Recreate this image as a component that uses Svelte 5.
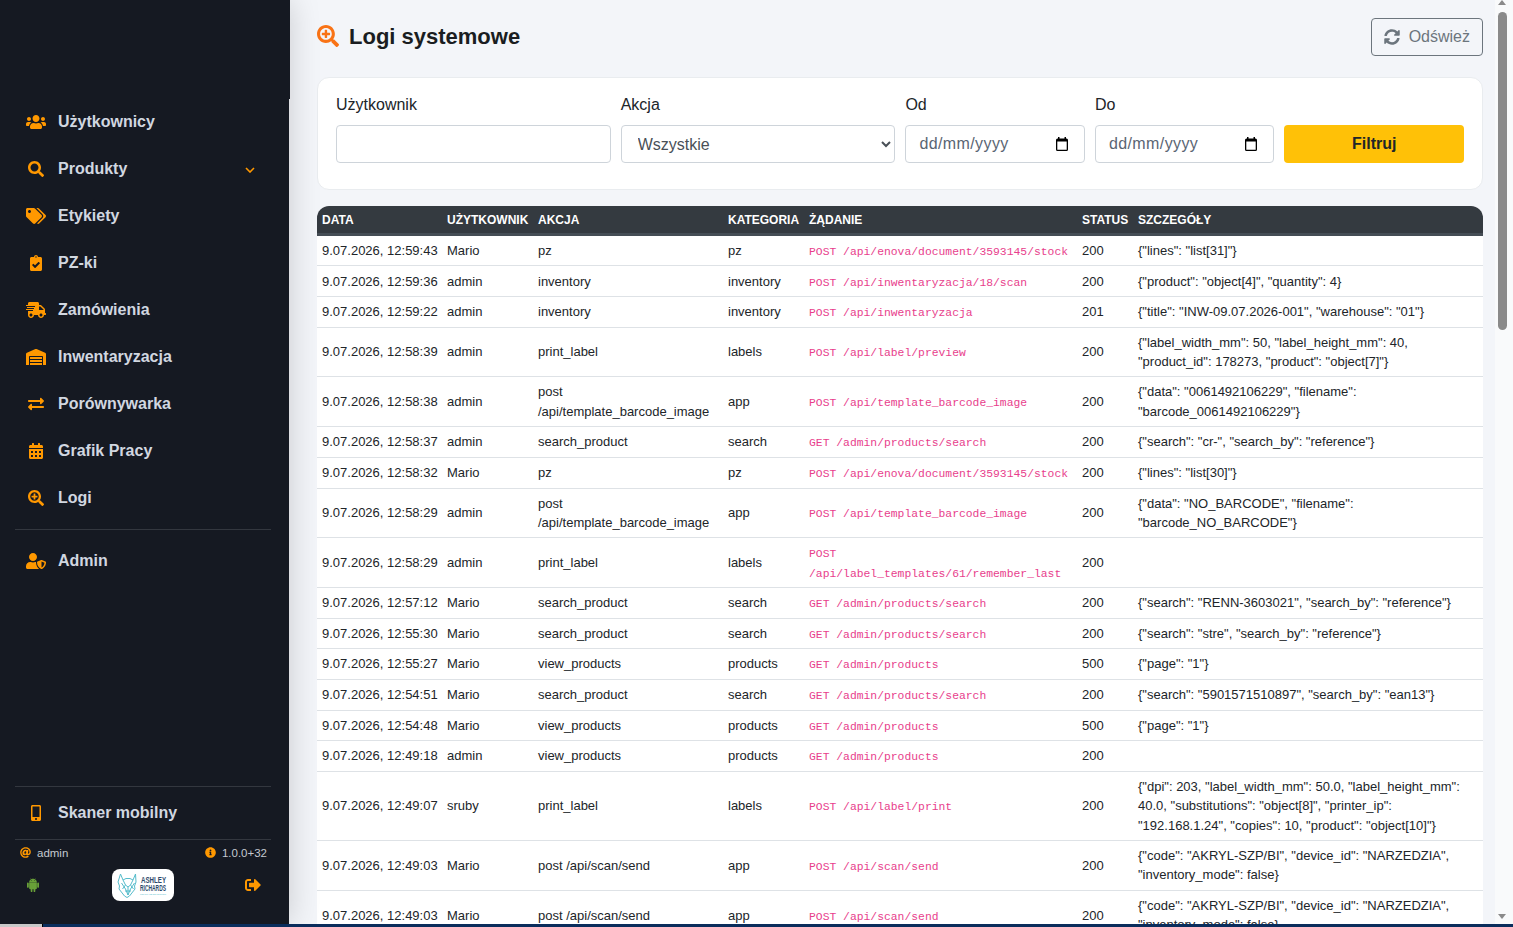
<script>
	const icons = {
		users: { vb: '0 0 640 512', d: 'M96 224c35.3 0 64-28.7 64-64s-28.7-64-64-64-64 28.7-64 64 28.7 64 64 64zm448 0c35.3 0 64-28.7 64-64s-28.7-64-64-64-64 28.7-64 64 28.7 64 64 64zm32 32h-64c-17.6 0-33.5 7.1-45.1 18.6 40.3 22.1 68.9 62 75.1 109.4h66c17.7 0 32-14.3 32-32v-32c0-35.3-28.7-64-64-64zm-256 0c61.9 0 112-50.1 112-112S381.9 32 320 32 208 82.1 208 144s50.1 112 112 112zm76.8 32h-8.3c-20.8 10-43.9 16-68.5 16s-47.6-6-68.5-16h-8.3C179.6 288 128 339.6 128 403.2V432c0 26.5 21.5 48 48 48h288c26.5 0 48-21.5 48-48v-28.8c0-63.6-51.6-115.2-115.2-115.2zm-223.7-13.4C161.5 263.1 145.6 256 128 256H64c-35.3 0-64 28.7-64 64v32c0 17.7 14.3 32 32 32h65.9c6.3-47.4 34.9-87.3 75.2-109.4z' },
		search: { vb: '0 0 512 512', d: 'M505 442.7L405.3 343c-4.5-4.5-10.6-7-17-7H372c27.6-35.3 44-79.7 44-128C416 93.1 322.9 0 208 0S0 93.1 0 208s93.1 208 208 208c48.3 0 92.7-16.4 128-44v16.3c0 6.4 2.5 12.5 7 17l99.7 99.7c9.4 9.4 24.6 9.4 33.9 0l28.3-28.3c9.4-9.4 9.4-24.6.1-34zM208 336c-70.7 0-128-57.2-128-128 0-70.7 57.2-128 128-128 70.7 0 128 57.2 128 128 0 70.7-57.2 128-128 128z' },
		searchPlus: { vb: '0 0 512 512', d: 'M304 192v32c0 6.6-5.4 12-12 12h-56v56c0 6.6-5.4 12-12 12h-32c-6.6 0-12-5.4-12-12v-56h-56c-6.6 0-12-5.4-12-12v-32c0-6.6 5.4-12 12-12h56v-56c0-6.6 5.4-12 12-12h32c6.6 0 12 5.4 12 12v56h56c6.6 0 12 5.4 12 12zm201 284.7L476.7 505c-9.4 9.4-24.6 9.4-33.9 0L343 405.3c-4.5-4.5-7-10.6-7-17V372c-35.3 27.6-79.7 44-128 44C93.1 416 0 322.9 0 208S93.1 0 208 0s208 93.1 208 208c0 48.3-16.4 92.7-44 128h16.3c6.4 0 12.5 2.5 17 7l99.7 99.7c9.3 9.4 9.3 24.6 0 34zM344 208c0-75.2-60.8-136-136-136S72 132.8 72 208s60.8 136 136 136 136-60.8 136-136z' },
		tags: { vb: '0 0 640 512', d: 'M497.941 225.941L286.059 14.059A48 48 0 0 0 252.118 0H48C21.49 0 0 21.49 0 48v204.118a48 48 0 0 0 14.059 33.941l211.882 211.882c18.744 18.745 49.136 18.746 67.882 0l204.118-204.118c18.745-18.745 18.745-49.137 0-67.882zM112 160c-26.51 0-48-21.49-48-48s21.49-48 48-48 48 21.49 48 48-21.49 48-48 48zm513.941 133.823L421.823 497.941c-18.745 18.745-49.137 18.745-67.882 0l-.36-.36L527.64 323.522c16.999-16.999 26.36-39.6 26.36-63.64s-9.362-46.641-26.36-63.64L331.397 0h48.721a48 48 0 0 1 33.941 14.059l211.882 211.882c18.745 18.745 18.745 49.137 0 67.882z' },
		clipboard: { vb: '0 0 384 512', d: 'M336 64h-80c0-35.3-28.7-64-64-64s-64 28.7-64 64H48C21.5 64 0 85.5 0 112v352c0 26.5 21.5 48 48 48h288c26.5 0 48-21.5 48-48V112c0-26.5-21.5-48-48-48zM192 40c13.3 0 24 10.7 24 24s-10.7 24-24 24-24-10.7-24-24 10.7-24 24-24zm121.2 231.8l-143 141.8c-4.7 4.7-12.3 4.6-17-.1l-82.6-83.3c-4.7-4.7-4.6-12.3.1-17L99.1 285c4.7-4.7 12.3-4.6 17 .1l46 46.4 106-105.2c4.7-4.7 12.3-4.6 17 .1l28.2 28.4c4.7 4.8 4.6 12.3-.1 17z' },
		truck: { vb: '0 0 640 512', d: 'M624 352h-16V243.9c0-12.7-5.1-24.9-14.1-33.9L494 110.1c-9-9-21.2-14.1-33.9-14.1H416V48c0-26.5-21.5-48-48-48H112C85.5 0 64 21.5 64 48v48H8c-4.4 0-8 3.6-8 8v16c0 4.4 3.6 8 8 8h272c4.4 0 8 3.6 8 8v16c0 4.4-3.6 8-8 8H40c-4.4 0-8 3.6-8 8v16c0 4.4 3.6 8 8 8h208c4.4 0 8 3.6 8 8v16c0 4.4-3.6 8-8 8H8c-4.4 0-8 3.6-8 8v16c0 4.4 3.6 8 8 8h208c4.4 0 8 3.6 8 8v16c0 4.4-3.6 8-8 8H64v128c0 53 43 96 96 96s96-43 96-96h128c0 53 43 96 96 96s96-43 96-96h48c8.8 0 16-7.2 16-16v-32c0-8.8-7.2-16-16-16zM160 464c-26.5 0-48-21.5-48-48s21.5-48 48-48 48 21.5 48 48-21.5 48-48 48zm320 0c-26.5 0-48-21.5-48-48s21.5-48 48-48 48 21.5 48 48-21.5 48-48 48zm80-208H416V144h44.1l99.9 99.9V256z' },
		warehouse: { vb: '0 0 640 512', d: 'M504 352H136.4c-4.4 0-8 3.6-8 8l-.1 48c0 4.4 3.6 8 8 8H504c4.4 0 8-3.6 8-8v-48c0-4.4-3.6-8-8-8zm0 96H136.1c-4.4 0-8 3.6-8 8l-.1 48c0 4.4 3.6 8 8 8h368c4.4 0 8-3.6 8-8v-48c0-4.4-3.6-8-8-8zm0-192H136.6c-4.4 0-8 3.6-8 8l-.1 48c0 4.4 3.6 8 8 8H504c4.4 0 8-3.6 8-8v-48c0-4.4-3.6-8-8-8zm106.5-139L338.4 3.7a48.15 48.15 0 0 0-36.9 0L29.5 117C11.7 124.5 0 141.9 0 161.3V504c0 4.4 3.6 8 8 8h80c4.4 0 8-3.6 8-8V256c0-17.6 14.6-32 32.6-32h382.8c18 0 32.6 14.4 32.6 32v248c0 4.4 3.6 8 8 8h80c4.4 0 8-3.6 8-8V161.3c0-19.4-11.7-36.8-29.5-44.3z' },
		exchange: { vb: '0 0 512 512', d: 'M0 168v-16c0-13.255 10.745-24 24-24h360V80c0-21.367 25.899-32.042 40.971-16.971l80 80c9.372 9.373 9.372 24.569 0 33.941l-80 80C409.956 271.982 384 261.456 384 240v-48H24c-13.255 0-24-10.745-24-24zm488 152H128v-48c0-21.314-25.862-32.08-40.971-16.971l-80 80c-9.372 9.373-9.372 24.569 0 33.941l80 80C102.057 463.997 128 453.437 128 432v-48h360c13.255 0 24-10.745 24-24v-16c0-13.255-10.745-24-24-24z' },
		calendar: { vb: '0 0 448 512', d: 'M0 464c0 26.5 21.5 48 48 48h352c26.5 0 48-21.5 48-48V192H0v272zm320-196c0-6.6 5.4-12 12-12h40c6.6 0 12 5.4 12 12v40c0 6.6-5.4 12-12 12h-40c-6.6 0-12-5.4-12-12v-40zm0 128c0-6.6 5.4-12 12-12h40c6.6 0 12 5.4 12 12v40c0 6.6-5.4 12-12 12h-40c-6.6 0-12-5.4-12-12v-40zM192 268c0-6.6 5.4-12 12-12h40c6.6 0 12 5.4 12 12v40c0 6.6-5.4 12-12 12h-40c-6.6 0-12-5.4-12-12v-40zm0 128c0-6.6 5.4-12 12-12h40c6.6 0 12 5.4 12 12v40c0 6.6-5.4 12-12 12h-40c-6.6 0-12-5.4-12-12v-40zM64 268c0-6.6 5.4-12 12-12h40c6.6 0 12 5.4 12 12v40c0 6.6-5.4 12-12 12H76c-6.6 0-12-5.4-12-12v-40zm0 128c0-6.6 5.4-12 12-12h40c6.6 0 12 5.4 12 12v40c0 6.6-5.4 12-12 12H76c-6.6 0-12-5.4-12-12v-40zM400 64h-48V16c0-8.8-7.2-16-16-16h-32c-8.8 0-16 7.2-16 16v48H160V16c0-8.8-7.2-16-16-16h-32c-8.8 0-16 7.2-16 16v48H48C21.5 64 0 85.5 0 112v48h448v-48c0-26.5-21.5-48-48-48z' },
		userShield: { vb: '0 0 640 512', d: 'M622.3 271.1l-115.2-45c-4.1-1.6-12.6-3.7-22.2 0l-115.2 45c-10.7 4.2-17.7 14-17.7 24.9 0 111.6 68.7 188.8 132.9 213.9 9.6 3.7 18 1.6 22.2 0C558.4 489.9 640 420.5 640 296c0-10.9-7-20.7-17.7-24.9zM496 462.4V273.3l95.5 37.3c-5.6 87.1-60.9 135.4-95.5 151.8zM224 256c70.7 0 128-57.3 128-128S294.7 0 224 0 96 57.3 96 128s57.3 128 128 128zm96 40c0-2.5.8-4.7 1.1-7.2-2.5-.1-4.9-.8-7.5-.8h-16.7c-22.2 10.2-46.9 16-72.9 16s-50.6-5.8-72.9-16h-16.7C60.2 288 0 348.2 0 422.4V464c0 26.5 21.5 48 48 48h352c6.8 0 13.3-1.5 19.2-4-54-42.9-99.2-116.7-99.2-212z' },
		mobile: { vb: '0 0 320 512', d: 'M272 0H48C21.5 0 0 21.5 0 48v416c0 26.5 21.5 48 48 48h224c26.5 0 48-21.5 48-48V48c0-26.5-21.5-48-48-48zM160 480c-17.7 0-32-14.3-32-32s14.3-32 32-32 32 14.3 32 32-14.3 32-32 32zm112-108c0 6.6-5.4 12-12 12H60c-6.6 0-12-5.4-12-12V60c0-6.6 5.4-12 12-12h200c6.6 0 12 5.4 12 12v312z' },
		at: { vb: '0 0 512 512', d: 'M256 8C118.941 8 8 118.919 8 256c0 137.059 110.919 248 248 248 48.154 0 95.342-14.14 135.408-40.223 12.005-7.815 14.625-24.288 5.552-35.372l-10.177-12.433c-7.671-9.371-21.179-11.667-31.373-5.129C325.92 429.757 291.314 440 256 440c-101.458 0-184-82.542-184-184S154.542 72 256 72c100.139 0 184 57.619 184 160 0 38.786-21.093 79.742-58.17 83.693-17.349-.454-16.91-12.857-13.476-30.024l23.433-121.11C394.653 149.75 383.308 136 368.225 136h-44.981a13.518 13.518 0 0 0-13.432 11.993l-.01.092c-14.697-17.901-40.448-21.775-59.971-21.775-74.58 0-137.831 62.234-137.831 151.46 0 65.303 36.785 105.87 96 105.87 26.984 0 57.369-15.637 74.991-38.333 9.522 34.104 40.613 34.103 70.71 34.103C462.609 379.41 504 307.798 504 232 504 95.653 394.023 8 256 8zm-21.68 304.43c-22.249 0-36.07-15.623-36.07-40.771 0-44.993 30.779-72.729 58.63-72.729 22.292 0 35.601 15.241 35.601 40.77 0 45.061-33.875 72.73-58.161 72.73z' },
		info: { vb: '0 0 512 512', d: 'M256 8C119.043 8 8 119.083 8 256c0 136.997 111.043 248 248 248s248-111.003 248-248C504 119.083 392.957 8 256 8zm0 110c23.196 0 42 18.804 42 42s-18.804 42-42 42-42-18.804-42-42 18.804-42 42-42zm56 254c0 6.627-5.373 12-12 12h-88c-6.627 0-12-5.373-12-12v-24c0-6.627 5.373-12 12-12h12v-64h-12c-6.627 0-12-5.373-12-12v-24c0-6.627 5.373-12 12-12h64c6.627 0 12 5.373 12 12v100h12c6.627 0 12 5.373 12 12v24z' },
		android: { vb: '0 0 448 512', d: 'M89.6 204.5v115.8c0 15.4-12.1 27.7-27.5 27.7-15.3 0-30.1-12.4-30.1-27.7V204.5c0-15.1 14.8-27.5 30.1-27.5 15.1 0 27.5 12.4 27.5 27.5zm10.8 157c0 16.4 13.2 29.6 29.6 29.6h19.9l.3 61.1c0 36.9 55.2 36.6 55.2 0v-61.1h37.2v61.1c0 36.7 55.5 36.8 55.5 0v-61.1h20.2c16.2 0 29.4-13.2 29.4-29.6V182.1H100.4v179.4zm248-189.1H99.3c0-42.8 25.6-80 63.6-99.4l-19.1-35.3c-2.8-4.9 4.3-8 6.7-3.8l19.4 35.6c34.9-15.5 75-14.7 108.3 0L297.5 34c2.5-4.3 9.5-1.1 6.7 3.8L285.1 73c37.7 19.4 63.3 56.6 63.3 99.4zm-170.7-55.5c0-5.7-4.6-10.5-10.5-10.5-5.7 0-10.2 4.8-10.2 10.5s4.6 10.5 10.2 10.5c5.9 0 10.5-4.8 10.5-10.5zm113.4 0c0-5.7-4.6-10.5-10.2-10.5-5.9 0-10.5 4.8-10.5 10.5s4.6 10.5 10.5 10.5c5.6 0 10.2-4.8 10.2-10.5zm94.8 60.5c-15.1 0-27.5 12.1-27.5 27.5v115.8c0 15.4 12.4 27.7 27.5 27.7 15.4 0 30.1-12.4 30.1-27.7V204.5c0-15.4-14.8-27.5-30.1-27.5z' },
		signOut: { vb: '0 0 512 512', d: 'M497 273L329 441c-15 15-41 4.5-41-17v-96H152c-13.3 0-24-10.7-24-24v-96c0-13.3 10.7-24 24-24h136V88c0-21.4 25.9-32 41-17l168 168c9.3 9.4 9.3 24.6 0 34zM192 436v-40c0-6.6-5.4-12-12-12H96c-17.7 0-32-14.3-32-32V160c0-17.7 14.3-32 32-32h84c6.6 0 12-5.4 12-12V76c0-6.6-5.4-12-12-12H96c-53 0-96 43-96 96v192c0 53 43 96 96 96h84c6.6 0 12-5.4 12-12z' },
		sync: { vb: '0 0 512 512', d: 'M370.72 133.28C339.458 104.008 298.888 87.962 255.848 88c-77.458.068-144.328 53.178-162.791 126.85-1.344 5.363-6.122 9.15-11.651 9.15H24.103c-7.498 0-13.194-6.807-11.807-14.176C33.933 94.924 134.813 8 256 8c66.448 0 126.791 26.136 171.315 68.685L463.03 40.97C478.149 25.851 504 36.559 504 57.941V192c0 13.255-10.745 24-24 24H345.941c-21.382 0-32.09-25.851-16.971-40.971l41.75-41.749zM32 296h134.059c21.382 0 32.09 25.851 16.971 40.971l-41.75 41.75c31.262 29.273 71.835 45.319 114.876 45.28 77.418-.07 144.315-53.144 162.787-126.849 1.344-5.363 6.122-9.15 11.651-9.15h57.304c7.498 0 13.194 6.807 11.807 14.176C478.067 417.076 377.187 504 256 504c-66.448 0-126.791-26.136-171.315-68.685L48.97 471.03C33.851 486.149 8 475.441 8 454.059V320c0-13.255 10.745-24 24-24z' }
	};

	const nav = [
		{ icon: 'users', label: 'Użytkownicy' },
		{ icon: 'search', label: 'Produkty', caret: true },
		{ icon: 'tags', label: 'Etykiety' },
		{ icon: 'clipboard', label: 'PZ-ki' },
		{ icon: 'truck', label: 'Zamówienia' },
		{ icon: 'warehouse', label: 'Inwentaryzacja' },
		{ icon: 'exchange', label: 'Porównywarka' },
		{ icon: 'calendar', label: 'Grafik Pracy' },
		{ icon: 'searchPlus', label: 'Logi' }
	];

	const columns = ['Data', 'Użytkownik', 'Akcja', 'Kategoria', 'Żądanie', 'Status', 'Szczegóły'];

	const logs = [
		['9.07.2026, 12:59:43', 'Mario', 'pz', 'pz', 'POST /api/enova/document/3593145/stock', 200, '{"lines": "list[31]"}'],
		['9.07.2026, 12:59:36', 'admin', 'inventory', 'inventory', 'POST /api/inwentaryzacja/18/scan', 200, '{"product": "object[4]", "quantity": 4}'],
		['9.07.2026, 12:59:22', 'admin', 'inventory', 'inventory', 'POST /api/inwentaryzacja', 201, '{"title": "INW-09.07.2026-001", "warehouse": "01"}'],
		['9.07.2026, 12:58:39', 'admin', 'print_label', 'labels', 'POST /api/label/preview', 200, '{"label_width_mm": 50, "label_height_mm": 40, "product_id": 178273, "product": "object[7]"}'],
		['9.07.2026, 12:58:38', 'admin', 'post /api/template_barcode_image', 'app', 'POST /api/template_barcode_image', 200, '{"data": "0061492106229", "filename": "barcode_0061492106229"}'],
		['9.07.2026, 12:58:37', 'admin', 'search_product', 'search', 'GET /admin/products/search', 200, '{"search": "cr-", "search_by": "reference"}'],
		['9.07.2026, 12:58:32', 'Mario', 'pz', 'pz', 'POST /api/enova/document/3593145/stock', 200, '{"lines": "list[30]"}'],
		['9.07.2026, 12:58:29', 'admin', 'post /api/template_barcode_image', 'app', 'POST /api/template_barcode_image', 200, '{"data": "NO_BARCODE", "filename": "barcode_NO_BARCODE"}'],
		['9.07.2026, 12:58:29', 'admin', 'print_label', 'labels', 'POST /api/label_templates/61/remember_last', 200, ''],
		['9.07.2026, 12:57:12', 'Mario', 'search_product', 'search', 'GET /admin/products/search', 200, '{"search": "RENN-3603021", "search_by": "reference"}'],
		['9.07.2026, 12:55:30', 'Mario', 'search_product', 'search', 'GET /admin/products/search', 200, '{"search": "stre", "search_by": "reference"}'],
		['9.07.2026, 12:55:27', 'Mario', 'view_products', 'products', 'GET /admin/products', 500, '{"page": "1"}'],
		['9.07.2026, 12:54:51', 'Mario', 'search_product', 'search', 'GET /admin/products/search', 200, '{"search": "5901571510897", "search_by": "ean13"}'],
		['9.07.2026, 12:54:48', 'Mario', 'view_products', 'products', 'GET /admin/products', 500, '{"page": "1"}'],
		['9.07.2026, 12:49:18', 'admin', 'view_products', 'products', 'GET /admin/products', 200, ''],
		['9.07.2026, 12:49:07', 'sruby', 'print_label', 'labels', 'POST /api/label/print', 200, '{"dpi": 203, "label_width_mm": 50.0, "label_height_mm": 40.0, "substitutions": "object[8]", "printer_ip": "192.168.1.24", "copies": 10, "product": "object[10]"}'],
		['9.07.2026, 12:49:03', 'Mario', 'post /api/scan/send', 'app', 'POST /api/scan/send', 200, '{"code": "AKRYL-SZP/BI", "device_id": "NARZEDZIA", "inventory_mode": false}'],
		['9.07.2026, 12:49:03', 'Mario', 'post /api/scan/send', 'app', 'POST /api/scan/send', 200, '{"code": "AKRYL-SZP/BI", "device_id": "NARZEDZIA", "inventory_mode": false}']
	];
</script>

{#snippet icon(name, cls)}
	<svg class={cls} viewBox={icons[name].vb} aria-hidden="true"><path fill="currentColor" d={icons[name].d} /></svg>
{/snippet}

{#snippet dateField(label)}
	<div class="field">
		<span>{label}</span>
		<div class="control date">
			<span class="date-text">dd/mm/yyyy</span>
			<svg class="date-ico" viewBox="0 0 12 14" aria-hidden="true">
				<path d="M2 0h1.500v1.500h5V0H10v1.500h.5A1.500 1.500 0 0 1 12 3v9.500a1.500 1.500 0 0 1-1.500 1.500h-9A1.500 1.500 0 0 1 0 12.500V3a1.500 1.500 0 0 1 1.500-1.500H2zM1.300 4.500v8.200h9.400V4.500z" fill="#000" fill-rule="evenodd" />
			</svg>
		</div>
	</div>
{/snippet}

<div class="screen">
	<div class="shell">
		<aside class="sidebar">
			<div class="brand"></div>

			<nav class="nav">
				{#each nav as item}
					<div class="nav-item">
						<span class="nav-icon">{@render icon(item.icon, 'ico')}</span>
						<span class="nav-label">{item.label}</span>
						{#if item.caret}
							<svg class="caret" viewBox="0 0 10 6" aria-hidden="true"><path d="M1 1l4 4 4-4" fill="none" stroke="currentColor" stroke-width="1.6" /></svg>
						{/if}
					</div>
				{/each}
				<hr class="rule rule-nav" />
				<div class="nav-item">
					<span class="nav-icon">{@render icon('userShield', 'ico')}</span>
					<span class="nav-label">Admin</span>
				</div>
			</nav>

			<div class="side-bottom">
				<hr class="rule" />
				<div class="nav-item mobile-item">
					<span class="nav-icon">{@render icon('mobile', 'ico')}</span>
					<span class="nav-label">Skaner mobilny</span>
				</div>
				<hr class="rule" />
				<div class="meta">
					<span class="meta-part">{@render icon('at', 'meta-ico')} admin</span>
					<span class="meta-part">{@render icon('info', 'meta-ico')} 1.0.0+32</span>
				</div>
				<div class="tools">
					{@render icon('android', 'android')}
					<div class="logo">
						<svg viewBox="0 0 62 32" width="62" height="32" aria-label="Ashley Richards">
							<g fill="none" stroke="#55bccb" stroke-width="1">
								<path d="M8.500 5l2.500 6 3-1.500h4l3 1.500 2.500-6 .5 8-1.500 4 .5 3-5.500 7-2.500 1.500-2.500-1.500-5.500-7 .5-3-1.500-4z" />
								<path d="M11 11l2.500 5 2.500 2 2.500-2 2.500-5M9.500 14l4 6 2.500 6 2.500-6 4-6M13.500 16l-3 4M18.500 16l3 4M16 18v8M13 22h6" />
							</g>
							<text class="logo-name" x="29" y="13.500" textLength="25" lengthAdjust="spacingAndGlyphs">ASHLEY</text>
							<text class="logo-name" x="28" y="22" textLength="26" lengthAdjust="spacingAndGlyphs">RICHARDS</text>
							<text class="logo-sub" x="28" y="25.500" textLength="26" lengthAdjust="spacingAndGlyphs">SOFTWARE DEVELOPER</text>
						</svg>
					</div>
					{@render icon('signOut', 'sign-out')}
				</div>
			</div>
		</aside>

		<main class="main">
			<header class="page-head">
				<h1 class="page-title">{@render icon('searchPlus', 'title-ico')} Logi systemowe</h1>
				<button class="refresh" type="button">{@render icon('sync', 'refresh-ico')} Odśwież</button>
			</header>

			<section class="filters">
				<label class="field">
					<span>Użytkownik</span>
					<input class="control" type="text" />
				</label>
				<label class="field">
					<span>Akcja</span>
					<select class="control">
						<option>Wszystkie</option>
					</select>
				</label>
				{@render dateField('Od')}
				{@render dateField('Do')}
				<button class="filter-btn" type="button">Filtruj</button>
			</section>

			<div class="table-wrap">
				<table class="logs">
					<colgroup>
						<col class="c-date" /><col class="c-user" /><col class="c-action" /><col class="c-cat" /><col class="c-req" /><col class="c-status" /><col />
					</colgroup>
					<thead>
						<tr>
							{#each columns as col}
								<th>{col}</th>
							{/each}
						</tr>
					</thead>
					<tbody>
						{#each logs as row}
							<tr>
								<td class="nowrap">{row[0]}</td>
								<td>{row[1]}</td>
								<td>{row[2]}</td>
								<td>{row[3]}</td>
								<td><code>{row[4]}</code></td>
								<td>{row[5]}</td>
								<td>{row[6]}</td>
							</tr>
						{/each}
					</tbody>
				</table>
			</div>
		</main>

		<div class="scrollbar" aria-hidden="true">
			<span class="arrow up"></span>
			<span class="thumb"></span>
			<span class="arrow down"></span>
		</div>
	</div>

	<div class="taskbar"><span class="task-start"></span></div>
</div>

<style>
	:global(body) {
		margin: 0;
		background: #f3f5f9;
		font-family: 'Liberation Sans', Arial, sans-serif;
		color: #212529;
	}

	.screen {
		width: 1513px;
		height: 927px;
		overflow: hidden;
	}

	.shell {
		display: flex;
		height: 924px;
		overflow: hidden;
	}

	/* sidebar */
	.sidebar {
		position: relative;
		z-index: 2;
		flex: 0 0 289px;
		min-width: 0;
		display: flex;
		flex-direction: column;
		background: #151922;
		box-shadow: 0 0 30px rgba(0, 0, 0, 0.18);
	}

	.brand {
		width: 290px;
		height: 98.500px;
		flex: none;
		background: #151922;
	}

	.nav {
		flex: 1;
	}

	.nav-item {
		display: flex;
		align-items: center;
		height: 47px;
		padding-left: 26px;
		padding-right: 34px;
		font-size: 16px;
		font-weight: 700;
		color: #d1d7e0;
	}

	.nav-icon {
		display: flex;
		justify-content: center;
		width: 20px;
		margin-right: 12px;
		color: #ff9800;
	}

	.ico {
		height: 16px;
		width: auto;
		display: block;
	}

	.nav-label {
		flex: 1;
	}

	.caret {
		width: 10px;
		height: 6px;
		margin-top: 2px;
		color: #ff9800;
	}

	.rule {
		height: 1px;
		margin: 0 18px 0 15px;
		border: 0;
		background: #33373f;
	}

	.rule-nav {
		margin-top: 7.500px;
		margin-bottom: 7px;
	}

	.side-bottom {
		flex: 0 0 auto;
		height: 138px;
	}

	.mobile-item {
		margin-top: 2px;
		margin-bottom: 3px;
	}

	.meta {
		display: flex;
		justify-content: space-between;
		align-items: center;
		height: 25px;
		margin: 0 22px 0 20px;
		font-size: 11.500px;
		color: #c4c9d0;
	}

	.meta-part {
		display: flex;
		align-items: center;
		gap: 6px;
	}

	.meta-ico {
		width: 11px;
		height: 11px;
		color: #ff9800;
	}

	.tools {
		display: flex;
		justify-content: space-between;
		align-items: center;
		margin: 4px 28px 0 26px;
	}

	.android {
		width: 14px;
		height: 16px;
		color: #689f38;
	}

	.logo {
		width: 62px;
		height: 32px;
		background: #fff;
		border-radius: 8px;
	}

	.logo svg {
		display: block;
	}

	.logo-name {
		font-family: 'Liberation Sans', Arial, sans-serif;
		font-size: 9px;
		font-weight: 700;
		fill: #2d4a6b;
	}

	.logo-sub {
		font-family: 'Liberation Sans', Arial, sans-serif;
		font-size: 2.500px;
		fill: #5cc0cf;
	}

	.sign-out {
		width: 16px;
		height: 16px;
		color: #ff9800;
	}

	/* main */
	.main {
		flex: 1;
		min-width: 0;
		padding: 18px 12px 0 28px;
		overflow: hidden;
	}

	.page-head {
		display: flex;
		justify-content: space-between;
		align-items: center;
		height: 38px;
		margin-bottom: 21px;
	}

	.page-title {
		display: flex;
		align-items: center;
		gap: 10px;
		margin: 0;
		font-size: 22px;
		font-weight: 700;
		color: #1a1d21;
	}

	.title-ico {
		width: 22px;
		height: 22px;
		margin-bottom: 2px;
		color: #f97316;
	}

	.refresh {
		display: flex;
		align-items: center;
		gap: 9px;
		height: 38px;
		padding: 0 12px;
		background: transparent;
		border: 1px solid #6c757d;
		border-radius: 4px;
		font: inherit;
		font-size: 16px;
		color: #6c757d;
	}

	.refresh-ico {
		width: 16px;
		height: 16px;
	}

	.filters {
		display: grid;
		grid-template-columns: 1.53fr 1.53fr 1fr 1fr 1fr;
		align-items: end;
		gap: 10px;
		padding: 15px 18px 26px;
		background: #fff;
		border: 1px solid #e9ecef;
		border-radius: 12px;
		margin-bottom: 16px;
	}

	.field {
		display: flex;
		flex-direction: column;
		gap: 8px;
		min-width: 0;
		font-size: 16px;
		line-height: 24px;
	}

	.control {
		box-sizing: border-box;
		width: 100%;
		height: 38px;
		padding: 0 13px;
		background: #fff;
		border: 1px solid #ced4da;
		border-radius: 4px;
		font: inherit;
		color: #495057;
	}

	select.control {
		padding-left: 12px;
	}

	.date {
		display: flex;
		align-items: center;
		justify-content: space-between;
		padding-right: 16px;
		color: #5a6573;
	}

	.date-text {
		letter-spacing: 0.4px;
	}

	.date-ico {
		width: 12px;
		height: 14px;
	}

	.filter-btn {
		height: 38px;
		background: #ffc107;
		border: 0;
		border-radius: 4px;
		font: inherit;
		font-size: 16px;
		font-weight: 700;
		color: #212529;
	}

	/* table */
	.table-wrap {
		border-radius: 12px 12px 0 0;
		overflow: hidden;
		background: #fff;
	}

	.logs {
		width: 100%;
		table-layout: fixed;
		border-collapse: collapse;
		font-size: 13px;
		line-height: 19.375px;
	}

	.c-date { width: 125px; }
	.c-user { width: 91px; }
	.c-action { width: 190px; }
	.c-cat { width: 81px; }
	.c-req { width: 273px; }
	.c-status { width: 56px; }

	th {
		height: 25px;
		padding: 2px 5px 0;
		background: #343a40;
		border-bottom: 3px solid #454d55;
		font-size: 12px;
		font-weight: 700;
		text-align: left;
		text-transform: uppercase;
		color: #fff;
		white-space: nowrap;
	}

	tbody tr {
		height: 30.670px;
	}

	td {
		padding: 5px;
		border-bottom: 1px solid #dee2e6;
		vertical-align: middle;
		color: #212529;
	}

	.nowrap {
		white-space: nowrap;
	}

	code {
		font-family: 'Liberation Mono', monospace;
		font-size: 11.375px;
		line-height: 1;
		color: #e83e8c;
	}

	/* window chrome */
	.scrollbar {
		position: relative;
		flex: 0 0 18px;
		background: #f9fafb;
	}

	.thumb {
		position: absolute;
		top: 12px;
		left: 3px;
		width: 9px;
		height: 318px;
		border-radius: 5px;
		background: #8a8a8a;
	}

	.arrow {
		position: absolute;
		left: 3px;
		width: 0;
		height: 0;
		border-left: 4.500px solid transparent;
		border-right: 4.500px solid transparent;
	}

	.arrow.up {
		top: 0;
		border-bottom: 5px solid #8a8a8a;
	}

	.arrow.down {
		bottom: 5px;
		border-top: 5px solid #8a8a8a;
	}

	.taskbar {
		height: 3px;
		background: #0a2d5c;
	}

	.task-start {
		display: block;
		width: 42px;
		height: 3px;
		background: #c8c8c8;
		border-right: 1px solid #000;
	}
</style>
